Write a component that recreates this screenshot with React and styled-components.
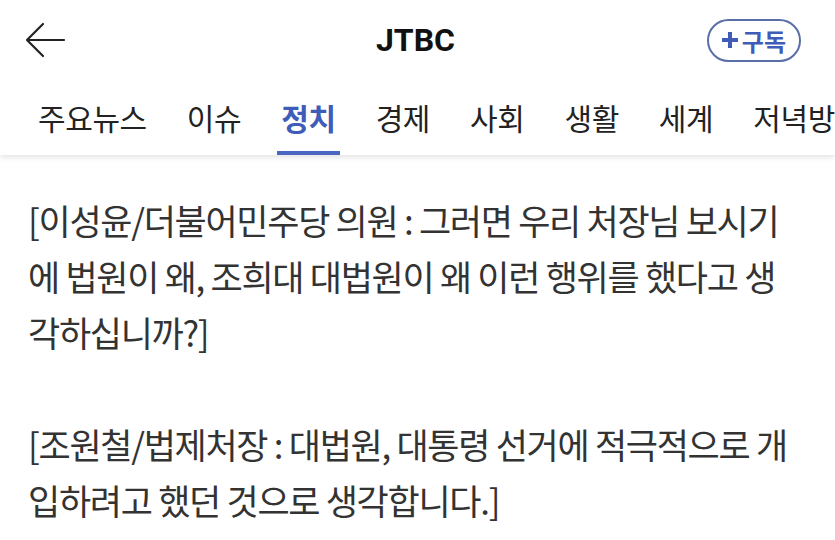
import React from "react";
import styled, { createGlobalStyle } from "styled-components";

const GlobalStyle = createGlobalStyle`
  html, body {
    margin: 0;
    padding: 0;
    background: #ffffff;
    font-family: "Noto Sans CJK KR", "Noto Sans", sans-serif;
  }
`;

const tabs = ["주요뉴스", "이슈", "정치", "경제", "사회", "생활", "세계", "저녁방송"];

const Page = styled.div`
  width: 835px;
  height: 540px;
  overflow: hidden;
  background: #ffffff;
`;

const Header = styled.header`
  position: relative;
  z-index: 2;
  background: #ffffff;
  box-shadow: 0 2px 6px rgba(0, 0, 0, 0.12);
`;

const TopBar = styled.div`
  height: 80px;
  display: grid;
  grid-template-columns: 1fr auto 1fr;
  align-items: center;
  padding: 0 34px 0 24px;
`;

const BackButton = styled.button`
  justify-self: start;
  border: 0;
  background: none;
  padding: 0;
  width: 44px;
  height: 40px;
  display: flex;
  align-items: center;
  cursor: pointer;
`;

const Title = styled.h1`
  margin: 0 0 0 6px;
  font-family: Roboto, "Noto Sans", sans-serif;
  font-weight: 700;
  font-size: 32px;
  color: #111;
  letter-spacing: 0;
`;

const Subscribe = styled.button`
  justify-self: end;
  height: 43px;
  padding: 0 13px 0 12px;
  border: 2px solid #5a6fa8;
  border-radius: 22px;
  background: #fff;
  color: #3f5cb8;
  font-family: "Noto Sans CJK KR", sans-serif;
  font-weight: 700;
  font-size: 24px;
  display: flex;
  align-items: center;
  gap: 3px;
  cursor: pointer;
`;

const TabBar = styled.nav`
  height: 75px;
  display: flex;
  gap: 40px;
  padding: 0 0 0 38px;
  white-space: nowrap;
  overflow: hidden;
`;

const Tab = styled.div`
  position: relative;
  flex: none;
  display: flex;
  align-items: center;
  height: 100%;
  padding-bottom: 2px;
  box-sizing: border-box;
  font-size: 30px;
  letter-spacing: -0.4px;
  font-weight: ${(p) => (p.$active ? 700 : 400)};
  color: ${(p) => (p.$active ? "#3f5cb8" : "#222")};

  &::after {
    content: "";
    display: ${(p) => (p.$active ? "block" : "none")};
    position: absolute;
    left: -4px;
    right: -4px;
    bottom: 0;
    height: 4px;
    background: #4a67c4;
  }
`;

const Article = styled.article`
  padding: 37px 36px 0 28px;
`;

const Paragraph = styled.p`
  margin: 0 0 56px;
  font-size: 35px;
  line-height: 56px;
  color: #333;
  letter-spacing: -1.3px;
  word-break: normal;
  line-break: anywhere;
`;

export default function App() {
  return (
    <Page>
      <GlobalStyle />
      <Header>
        <TopBar>
          <BackButton aria-label="뒤로">
            <svg width="42" height="36" viewBox="0 0 42 36" fill="none">
              <path
                d="M40 18H3M19 2L3 18l16 16"
                stroke="#222"
                strokeWidth="2.2"
                strokeLinecap="round"
                strokeLinejoin="round"
              />
            </svg>
          </BackButton>
          <Title>JTBC</Title>
          <Subscribe>
            <svg width="18" height="18" viewBox="0 0 18 18">
              <path d="M9 1v16M1 9h16" stroke="#3f5cb8" strokeWidth="4" />
            </svg>
            구독
          </Subscribe>
        </TopBar>
        <TabBar>
          {tabs.map((t) => (
            <Tab key={t} $active={t === "정치"}>
              {t}
            </Tab>
          ))}
        </TabBar>
      </Header>
      <Article>
        <Paragraph>
          [이성윤/더불어민주당 의원 : 그러면 우리 처장님 보시기에 법원이 왜, 조희대 대법원이 왜 이런 행위를 했다고 생각하십니까?]
        </Paragraph>
        <Paragraph>
          [조원철/법제처장 : 대법원, 대통령 선거에 적극적으로 개입하려고 했던 것으로 생각합니다.]
        </Paragraph>
      </Article>
    </Page>
  );
}
